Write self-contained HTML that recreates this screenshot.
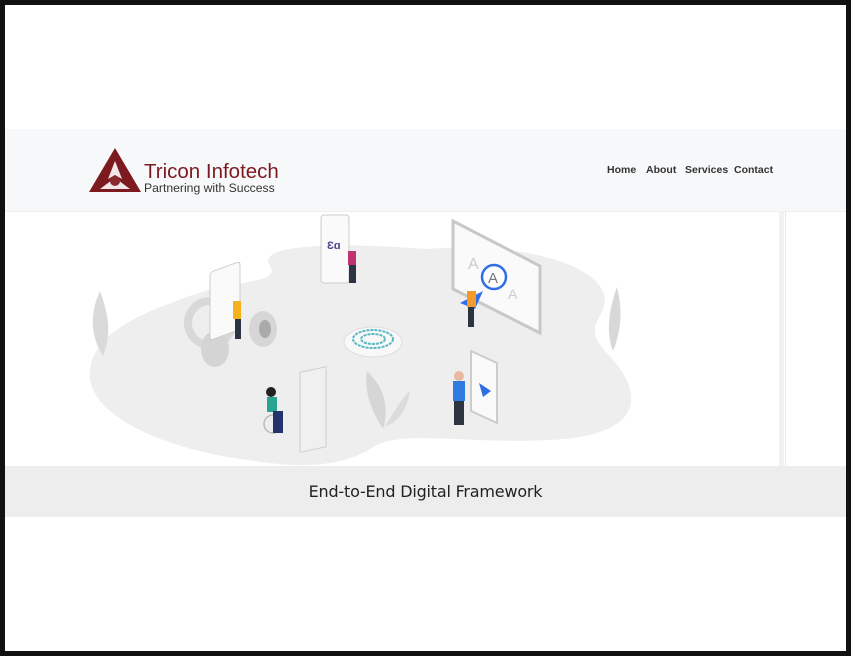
<!DOCTYPE html>
<html><head><meta charset="utf-8"><style>
html,body{margin:0;padding:0;background:#111;}
.page{position:absolute;left:5px;top:5px;width:841px;height:646px;background:#fff;overflow:hidden;}
.hdr{position:absolute;left:0;top:124px;width:841px;height:82px;background:#f7f8f9;border-bottom:1px solid #eceef0;}
.nav{position:absolute;top:159px;font:bold 10.5px "Liberation Sans",sans-serif;color:#333;}
.brand{position:absolute;left:139px;top:155px;font:20.5px "Liberation Sans",sans-serif;color:#7d1a1f;line-height:24px;}
.tag{position:absolute;left:139px;top:176px;font:12.2px "Liberation Sans",sans-serif;color:#333;line-height:14px;}
.cap{position:absolute;left:0;top:461px;width:841px;height:51px;background:#ededed;text-align:center;font:16px "DejaVu Sans","Liberation Sans",sans-serif;color:#222;line-height:52px;letter-spacing:-0.2px;}
</style></head><body>
<div class="page">
<div class="hdr"></div>
<svg style="position:absolute;left:83px;top:142px" width="54" height="46" viewBox="0 0 54 46">
<path d="M27 1 L53 45 L1 45 Z" fill="#7d1a1f"/>
<path d="M27 14 L34 32 L27 28 L20 32 Z M12 42 L24 33 L27 36 L30 33 L42 42 Z" fill="#fff" opacity="0.9"/>
<circle cx="27" cy="34" r="5" fill="#8a2a2f"/>
</svg>
<div class="brand">Tricon Infotech</div>
<div class="tag">Partnering with Success</div>
<div class="nav" style="left:602px;top:159px">Home</div>
<div class="nav" style="left:641px;top:159px">About</div>
<div class="nav" style="left:680px;top:159px">Services</div>
<div class="nav" style="left:729px;top:159px">Contact</div>

<div style="position:absolute;left:774px;top:206px;width:5px;height:255px;background:#f1f1f1"></div>
<div style="position:absolute;left:780px;top:206px;width:1px;height:255px;background:#e8e8e8"></div>

<svg style="position:absolute;left:0;top:206px" width="780" height="255" viewBox="0 0 780 255">
<path d="M265 55 C250 35 320 30 420 38 C520 30 600 55 600 90 C598 110 578 115 600 140 C640 180 640 220 560 228 C470 235 400 218 370 235 C340 255 300 258 250 250 C150 238 80 200 85 160 C88 120 140 100 200 80 C240 70 275 70 265 55 Z" fill="#eeeeee"/>
<ellipse cx="205" cy="112" rx="22" ry="22" fill="none" stroke="#d8d8d8" stroke-width="8"/>
<ellipse cx="210" cy="138" rx="14" ry="18" fill="#d4d4d4"/>
<ellipse cx="258" cy="118" rx="14" ry="18" fill="#d6d6d6"/>
<ellipse cx="260" cy="118" rx="6" ry="9" fill="#aaa"/>
<rect x="205" y="60" width="30" height="68" rx="3" fill="#fafafa" stroke="#ccc" transform="skewY(-20) translate(0,76)"/>
<rect x="228" y="90" width="8" height="18" fill="#f5b21d"/><rect x="230" y="108" width="6" height="20" fill="#2b3440"/>
<rect x="316" y="4" width="28" height="68" rx="3" fill="#fafafa" stroke="#ccc"/>
<text x="322" y="38" font-family="Liberation Sans" font-size="11" font-weight="bold" fill="#4a3d8f">Ɛɑ</text>
<rect x="343" y="40" width="8" height="14" fill="#c0336e"/><rect x="344" y="54" width="7" height="18" fill="#2b3440"/>
<path d="M448 10 L535 55 L535 122 L448 78 Z" fill="#fafafa" stroke="#c8c8c8" stroke-width="3"/>
<text x="463" y="58" font-family="Liberation Sans" font-size="16" fill="#ccc">A</text>
<text x="503" y="88" font-family="Liberation Sans" font-size="14" fill="#ccc">A</text>
<circle cx="489" cy="66" r="12" fill="#fff" stroke="#2f6fe6" stroke-width="2.5"/>
<text x="483" y="72" font-family="Liberation Sans" font-size="15" fill="#777">A</text>
<path d="M455 92 L478 80 L470 98 Z" fill="#2f6fe6"/>
<rect x="462" y="80" width="9" height="16" fill="#f39b2a"/><rect x="463" y="96" width="6" height="20" fill="#2b3440"/>
<ellipse cx="368" cy="131" rx="29" ry="15" fill="#f8f8f8" stroke="#ddd"/>
<ellipse cx="368" cy="128" rx="20" ry="9" fill="none" stroke="#5bb7c0" stroke-width="2" stroke-dasharray="3 1"/>
<ellipse cx="368" cy="128" rx="12" ry="5" fill="none" stroke="#5bb7c0" stroke-width="2" stroke-dasharray="3 1"/>
<path d="M98 145 C82 120 88 95 95 80 C102 100 108 120 98 145 Z" fill="#dadada"/>
<path d="M608 140 C600 120 605 95 612 76 C618 100 616 120 608 140 Z" fill="#d8d8d8"/>
<path d="M378 218 C360 190 360 170 362 160 C378 175 385 195 378 218 Z" fill="#d6d6d6"/>
<path d="M380 215 C390 200 398 185 405 180 C402 200 392 212 380 215 Z" fill="#dcdcdc"/>
<rect x="295" y="160" width="26" height="80" fill="#f0f0f0" stroke="#ccc" transform="skewY(-12) translate(0,64)"/>
<circle cx="268" cy="213" r="9" fill="none" stroke="#bbb" stroke-width="1.5"/>
<rect x="262" y="186" width="10" height="15" fill="#2aa392"/><rect x="268" y="200" width="10" height="22" fill="#23336b"/>
<circle cx="266" cy="181" r="5" fill="#222"/>
<path d="M466 140 L492 152 L492 212 L466 200 Z" fill="#fafafa" stroke="#ccc" stroke-width="2"/>
<path d="M474 172 L486 180 L478 186 Z" fill="#2f6fe6"/>
<rect x="448" y="170" width="12" height="20" fill="#2f7ae0"/><rect x="449" y="190" width="10" height="24" fill="#2b3440"/>
<circle cx="454" cy="165" r="5" fill="#e8b8a0"/>
</svg>
<div class="cap">End-to-End Digital Framework</div>
</div>
</body></html>
